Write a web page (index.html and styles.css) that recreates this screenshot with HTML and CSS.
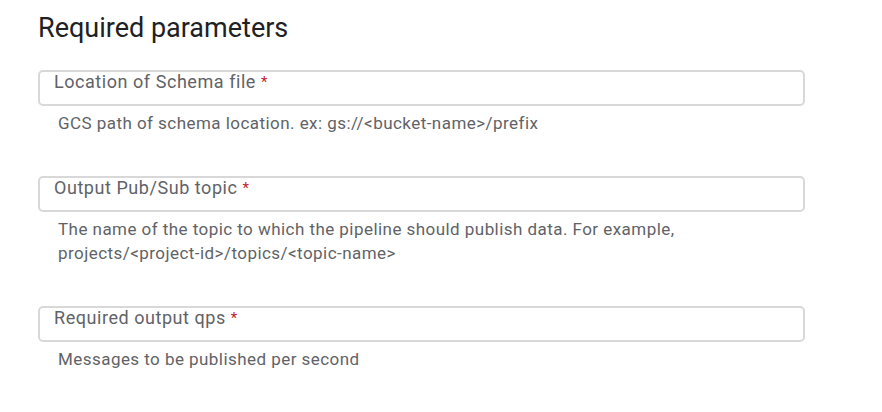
FILE: index.html
```html
<!DOCTYPE html>
<html lang="en">
<head>
    <meta charset="UTF-8">
    <meta name="viewport" content="width=device-width, initial-scale=1.0">
    <title>Required parameters</title>
    <link rel="stylesheet" href="styles.css">
</head>
<body>
    <div class="container">
        <h2 class="section-title">Required parameters</h2>

        <div class="field">
            <div class="input-box">
                <span class="label">Location of Schema file</span><span class="required">*</span>
            </div>
            <p class="hint">GCS path of schema location. ex: gs://&lt;bucket-name&gt;/prefix</p>
        </div>

        <div class="field">
            <div class="input-box">
                <span class="label">Output Pub/Sub topic</span><span class="required">*</span>
            </div>
            <p class="hint">The name of the topic to which the pipeline should publish data. For example, projects/&lt;project-id&gt;/topics/&lt;topic-name&gt;</p>
        </div>

        <div class="field">
            <div class="input-box">
                <span class="label">Required output qps</span><span class="required">*</span>
            </div>
            <p class="hint">Messages to be published per second</p>
        </div>
    </div>
</body>
</html>
```

FILE: styles.css
```css
body {
    font-family: Roboto, 'Noto Sans', sans-serif;
    color: #202124;
    background-color: #fff;
    margin: 0;
}

.container {
    width: 767px;
    padding: 12px 0 0 38px;
}

.section-title {
    font-size: 27px;
    font-weight: 400;
    line-height: 32px;
    margin: 0 0 26px 0;
}

.field {
    margin-bottom: 41px;
}

.input-box {
    box-sizing: border-box;
    height: 36px;
    border: 2px solid #d8d8d8;
    border-radius: 5px;
    padding: 0 14px;
    line-height: 20px;
}

.label {
    font-size: 18px;
    letter-spacing: 0.55px;
    color: #5f6368;
}

.required {
    color: #c5221f;
    font-size: 15px;
    margin-left: 5px;
    vertical-align: top;
}

.hint {
    font-size: 17px;
    letter-spacing: 0.45px;
    color: #5f6368;
    line-height: 24px;
    margin: 5px 0 0 20px;
    max-width: 640px;
}
```
